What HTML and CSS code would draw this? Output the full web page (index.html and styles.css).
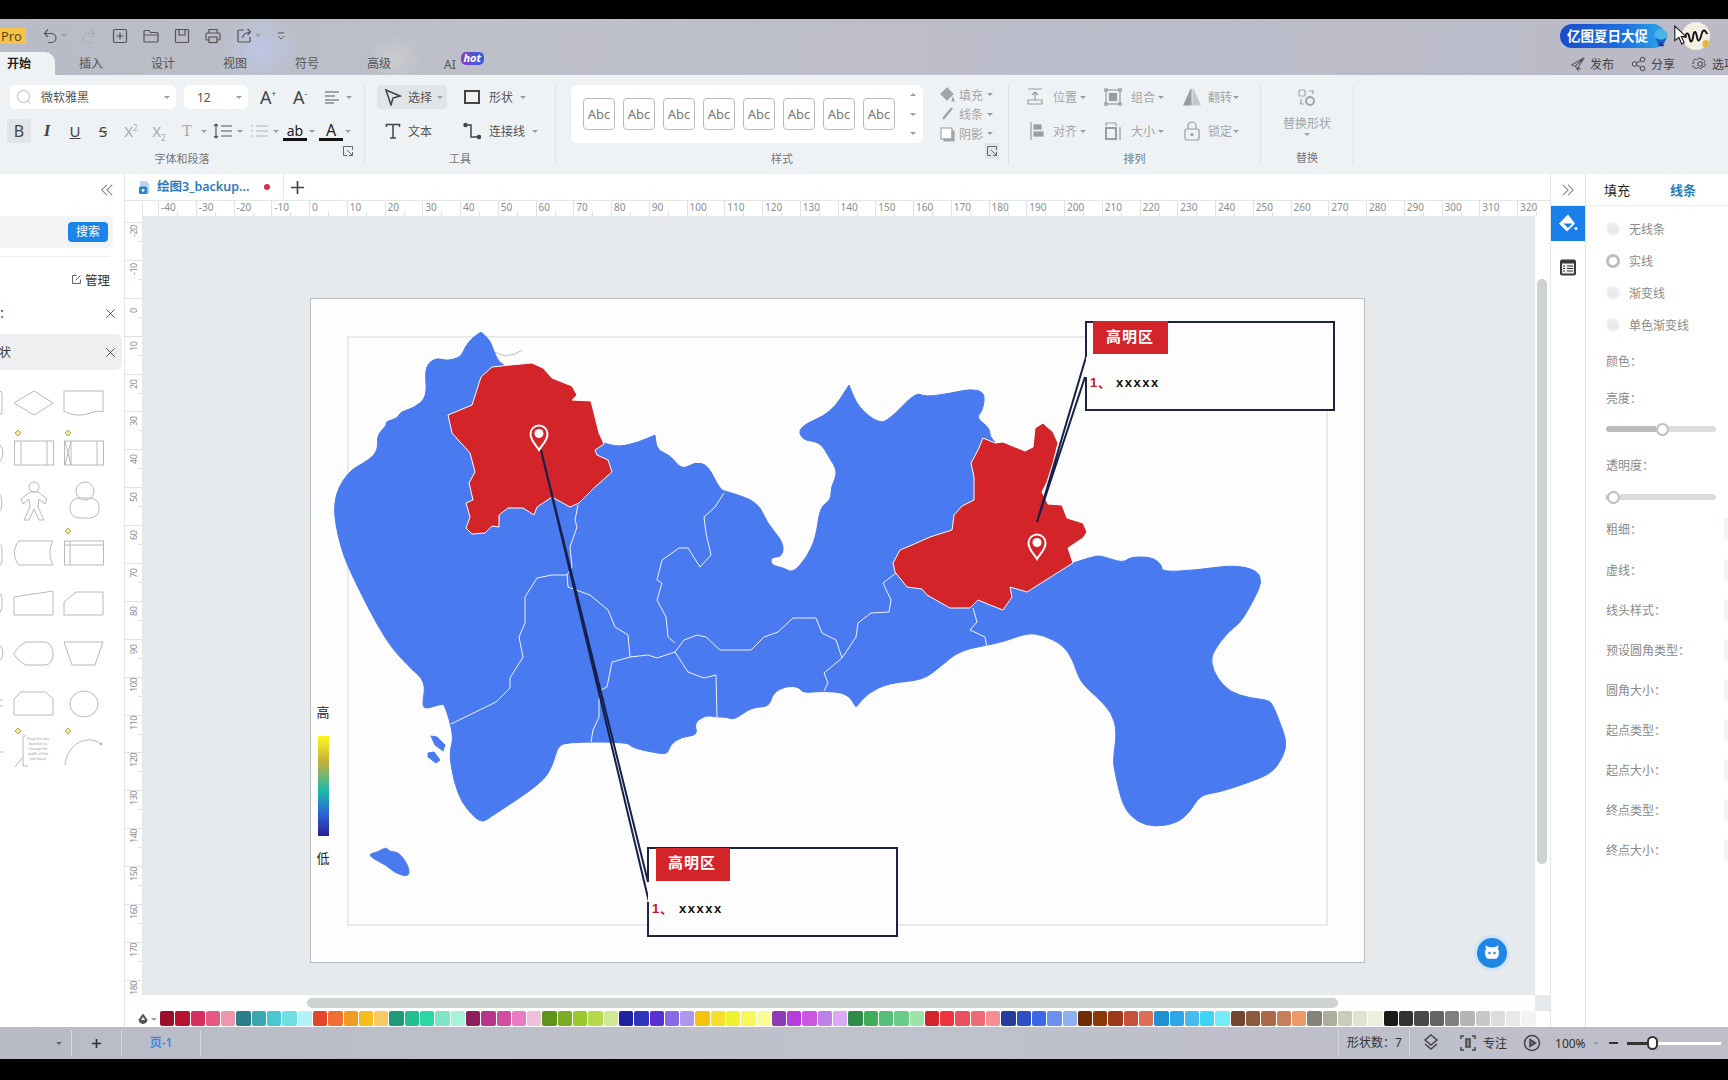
FILE: index.html
```html
<!DOCTYPE html>
<html lang="zh-CN">
<head>
  <meta charset="UTF-8" />
  <meta name="viewport" content="width=device-width, initial-scale=1" />
  <title>亿图图示</title>
  <link rel="stylesheet" href="styles.css">
</head>
<body>
  <div class="black-bar top"></div>

  <header class="titlebar">
    <div class="quick-row">
      <span class="pro">Pro</span>
      <div class="quick">
        <span class="with-caret"><svg class="ico" viewBox="0 0 18 18"><path d="M7 2.500 3.500 6.500 7 10M4 6.500h6.500a4.500 4.500 0 0 1 0 9H7"/></svg><i class="caret"></i></span>
        <svg class="ico faint" viewBox="0 0 18 18"><path d="M11 2.500l3.500 4-3.500 3.500M14 6.500H7.500a4.500 4.500 0 0 0 0 9H11"/></svg>
        <svg class="ico" viewBox="0 0 18 18"><rect x="2.500" y="2.500" width="13" height="13" rx="1.500"/><path d="M9 5.500v7M5.500 9h7"/></svg>
        <svg class="ico" viewBox="0 0 18 18"><path d="M2 14V4.500a1 1 0 0 1 1-1h4l1.500 2H15a1 1 0 0 1 1 1V14a1 1 0 0 1-1 1H3a1 1 0 0 1-1-1zM2 8h14"/></svg>
        <svg class="ico" viewBox="0 0 18 18"><rect x="2.500" y="2.500" width="13" height="13" rx="1"/><path d="M6 2.500v5.500h6V2.500"/></svg>
        <svg class="ico" viewBox="0 0 18 18"><path d="M5 6V2.500h8V6M5 13H3a1 1 0 0 1-1-1V7a1 1 0 0 1 1-1h12a1 1 0 0 1 1 1v5a1 1 0 0 1-1 1h-2"/><rect x="5" y="10" width="8" height="5.500"/></svg>
        <span class="with-caret"><svg class="ico" viewBox="0 0 18 18"><path d="M9 3H4a1 1 0 0 0-1 1v10a1 1 0 0 0 1 1h10a1 1 0 0 0 1-1v-4M7.500 11c.5-3.500 3-5.500 8-6M12.500 2l3 3-3 3"/></svg><i class="caret"></i></span>
        <svg class="ico small" viewBox="0 0 18 18"><path d="M5 5h8M5 9l4 4 4-4"/></svg>
      </div>
      <div class="promo-wrap">
        <div class="promo">亿图夏日大促
          <svg class="promo-gift" viewBox="0 0 22 24"><circle cx="11" cy="9" r="7" fill="#49b6e6"/><path d="M4 10c3 5 11 5 14 0l-4 9H8z" fill="#1d5fc8"/><path d="M7 21h8l-4-5z" fill="#153f9c"/></svg>
        </div>
        <div class="avatar">
          <svg viewBox="0 0 30 30"><path d="M3 17c2-7 4-6 5 0s3 5 4-2 3-5 4 1 3 5 5-3 5-2 6 0" fill="none" stroke="#111" stroke-width="2"/><path d="M22 21l4-2 3 2-1 5-3 2-3-2z" fill="#e9b63c"/></svg>
        </div>
      </div>
    </div>
    <div class="tab-row">
      <nav class="tabs">
        <span class="tab active">开始</span>
        <span class="tab">插入</span>
        <span class="tab">设计</span>
        <span class="tab">视图</span>
        <span class="tab">符号</span>
        <span class="tab">高级</span>
        <span class="tab ai">AI<b class="hot">hot</b></span>
      </nav>
      <div class="actions">
        <span class="action"><svg class="ico small-ico" viewBox="0 0 18 18"><path d="M16 2 2 10l4 1.500L16 2l-7 11v3l-3-4.500M9 13l3 2z"/></svg>发布</span>
        <span class="action"><svg class="ico small-ico" viewBox="0 0 18 18"><circle cx="4" cy="9" r="2.500"/><circle cx="13" cy="4" r="2.500"/><circle cx="13" cy="14" r="2.500"/><path d="M6 8l5-3M6 10l5 3"/></svg>分享</span>
        <span class="action"><svg class="ico small-ico" viewBox="0 0 18 18"><circle cx="9" cy="9" r="2.500"/><path d="M7.500 2h3l.5 2 2-.8 2 2.500-1.300 1.800 1.800 1.500-1 3-2.200-.2-.8 2.200-3 .5-1.500-1.700-1.500 1.700-3-.5-.8-2.200-2.200.2-1-3L2 7.500.7 5.700l2-2.500 2 .8z" transform="translate(.6 .6) scale(.93)"/></svg>选项</span>
      </div>
    </div>
    <svg class="cursor" viewBox="0 0 16 24"><path d="M1 1v18l5-4 3.500 8 3-1.500L9 14h6z" fill="#fff" stroke="#111" stroke-width="1.300"/></svg>
  </header>

  <section class="ribbon">
    <div class="rgroup font-group">
      <div class="rbody">
        <div class="rrow font-row-one">
          <div class="combo font-combo">
            <svg class="search-ico" viewBox="0 0 16 16"><circle cx="7.500" cy="7.500" r="6"/><path d="M12 12l2.500 2.500"/></svg>
            <span class="combo-text">微软雅黑</span><i class="caret"></i>
          </div>
          <div class="combo size-combo"><span class="combo-text">12</span><i class="caret"></i></div>
          <span class="fmt big-a">A<sup>+</sup></span>
          <span class="fmt big-a">A<sup>-</sup></span>
          <span class="with-caret"><svg class="ico line-ico" viewBox="0 0 24 18"><path d="M5 4h14M5 8h10M5 12h14M5 15h9"/></svg><i class="caret"></i></span>
        </div>
        <div class="rrow font-row-two">
          <span class="fmt pressed bold-b">B</span>
          <span class="fmt italic-i">I</span>
          <span class="fmt under-u">U</span>
          <span class="fmt strike-s">S</span>
          <span class="fmt muted">X<sup>2</sup></span>
          <span class="fmt muted">X<sub>2</sub></span>
          <span class="with-caret"><span class="fmt muted serif-t">T</span><i class="caret"></i></span>
          <span class="with-caret"><svg class="ico line-ico" viewBox="0 0 24 18"><path d="M5 2v14M3 4l2-2 2 2M3 14l2 2 2-2M10 4h11M10 9h11M10 14h11"/></svg><i class="caret"></i></span>
          <span class="with-caret"><svg class="ico line-ico pale" viewBox="0 0 24 18"><path d="M9 4h12M9 9h12M9 14h12M4 4h2M4 9h2M4 14h2"/></svg><i class="caret"></i></span>
          <span class="with-caret"><span class="fmt bar-text">ab</span><i class="caret"></i></span>
          <span class="with-caret"><span class="fmt bar-text big-letter">A</span><i class="caret"></i></span>
        </div>
      </div>
      <div class="rlabel">字体和段落</div>
      <svg class="launcher" viewBox="0 0 12 12"><path d="M10.500 5V1.500h-9v9H5M5 5l5.500 5.500M10.500 7v3.500H7"/></svg>
    </div>

    <div class="rgroup tool-group">
      <div class="rbody tool-grid">
        <span class="tool selected"><svg class="ico tool-ico" viewBox="0 0 18 18"><path d="M2 2l14 6-7 2-2 7z"/></svg>选择<i class="caret"></i></span>
        <span class="tool second"><svg class="ico tool-ico" viewBox="0 0 18 18"><rect x="2" y="3" width="14" height="12" stroke-width="2"/></svg>形状<i class="caret"></i></span>
        <span class="tool"><svg class="ico tool-ico" viewBox="0 0 18 18"><path d="M2.500 5V2.500h13V5M9 2.500V16M6 16h6"/></svg>文本</span>
        <span class="tool second"><svg class="ico tool-ico" viewBox="0 0 18 18"><path d="M4 3h4v12h6"/><circle cx="2.500" cy="3" r="1.500" fill="#444"/><circle cx="16" cy="15" r="1.500" fill="#444"/></svg>连接线<i class="caret"></i></span>
      </div>
      <div class="rlabel">工具</div>
    </div>

    <div class="rgroup style-group">
      <div class="rbody style-body">
        <div class="style-box">
          <span class="abc">Abc</span><span class="abc">Abc</span><span class="abc">Abc</span><span class="abc">Abc</span>
          <span class="abc">Abc</span><span class="abc">Abc</span><span class="abc">Abc</span><span class="abc">Abc</span>
          <div class="style-arrows"><i class="caret up"></i><i class="caret"></i><i class="caret"></i></div>
        </div>
        <div class="style-side">
          <span class="side-item"><svg class="ico gray-fill" viewBox="0 0 16 16"><path d="M8 1l6 6-6 6-6-6zM14 11l1 3h-2z"/></svg>填充<i class="caret"></i></span>
          <span class="side-item"><svg class="ico" viewBox="0 0 16 16"><path d="M13 2 4 13" stroke-width="2.500"/></svg>线条<i class="caret"></i></span>
          <span class="side-item"><svg class="ico gray-fill" viewBox="0 0 16 16"><rect x="2" y="2" width="11" height="11" fill="#fff"/><path d="M13 5h2v10H5v-2h8z"/></svg>阴影<i class="caret"></i></span>
        </div>
      </div>
      <div class="rlabel">样式</div>
      <svg class="launcher boxed" viewBox="0 0 12 12"><path d="M10.500 5V1.500h-9v9H5M5 5l5.500 5.500M10.500 7v3.500H7"/></svg>
    </div>

    <div class="rgroup arrange-group">
      <div class="rbody arrange-grid">
        <span class="arrange"><svg class="ico arr-ico" viewBox="0 0 20 20"><path d="M3 2h14M10 5v8M7 8l3-3 3 3M3 13h14v4H3z"/></svg>位置<i class="caret"></i></span>
        <span class="arrange"><svg class="ico arr-ico" viewBox="0 0 20 20"><rect x="3" y="3" width="14" height="14"/><rect x="6.500" y="6.500" width="7" height="7" fill="#9a9da0"/><circle cx="3" cy="3" r="1.500"/><circle cx="17" cy="3" r="1.500"/><circle cx="3" cy="17" r="1.500"/><circle cx="17" cy="17" r="1.500"/></svg>组合<i class="caret"></i></span>
        <span class="arrange"><svg class="ico arr-ico" viewBox="0 0 20 20"><path d="M9 2 2 18h7z" fill="#9a9da0"/><path d="M11 2l7 16h-7z" fill="#c6c9cc" stroke="#c6c9cc"/></svg>翻转<i class="caret"></i></span>
        <span class="arrange"><svg class="ico arr-ico" viewBox="0 0 20 20"><path d="M6 1v18"/><rect x="9" y="4" width="7" height="4" fill="#9a9da0"/><rect x="9" y="11" width="9" height="4" fill="#9a9da0"/></svg>对齐<i class="caret"></i></span>
        <span class="arrange"><svg class="ico arr-ico" viewBox="0 0 20 20"><path d="M3 2h10M3 2v3M13 2v3"/><rect x="3" y="7" width="10" height="11" stroke-width="2"/><path d="M17 7v11M16 7h2M16 18h2"/></svg>大小<i class="caret"></i></span>
        <span class="arrange"><svg class="ico arr-ico" viewBox="0 0 20 20"><rect x="3" y="8" width="14" height="11" rx="2"/><path d="M6 8V5a4 4 0 0 1 8 0v3"/><circle cx="10" cy="13.500" r="1" fill="#9a9da0"/></svg>锁定<i class="caret"></i></span>
      </div>
      <div class="rlabel">排列</div>
    </div>

    <div class="rgroup replace-group">
      <div class="rbody replace-body">
        <svg class="ico replace-ico" viewBox="0 0 20 20"><rect x="2" y="2" width="6" height="6" rx="1"/><circle cx="13" cy="13" r="4" stroke-width="2"/><path d="M4 11v5h3M3 15l1 1M12 3h4v3M15 2l1 1" /></svg>
        <span class="replace-text">替换形状</span>
        <i class="caret"></i>
      </div>
      <div class="rlabel">替换</div>
    </div>
  </section>

  <main class="workspace">
    <aside class="left-panel">
      <div class="panel-head"><svg class="ico collapse" viewBox="0 0 16 16"><path d="M8 2 2 8l6 6M14 2 8 8l6 6"/></svg></div>
      <div class="search-row"><button class="search-btn">搜索</button></div>
      <div class="manage-row"><svg class="ico manage-ico" viewBox="0 0 14 14"><path d="M7 2H2v10h10V7M6 8l6-6"/></svg>管理</div>
      <div class="lib-row"><span>： </span><svg class="ico close" viewBox="0 0 12 12"><path d="M1.500 1.500l9 9M10.500 1.500l-9 9"/></svg></div>
      <div class="lib-row active"><span>状</span><svg class="ico close" viewBox="0 0 12 12"><path d="M1.500 1.500l9 9M10.500 1.500l-9 9"/></svg></div>
      <div class="shape-grid">
        <svg class="shape" viewBox="0 0 40 50"><rect x="-20" y="13" width="58" height="24" rx="3"/></svg>
        <svg class="shape" viewBox="0 0 40 50"><path d="M0 25 20 13 39 25 20 37z"/></svg>
        <svg class="shape" viewBox="0 0 40 50"><path d="M0 13H39V34C30 31 24 38 14 37 8 37 4 35 0 33z"/></svg>

        <svg class="shape" viewBox="0 0 40 50"><circle cx="26" cy="25" r="13"/></svg>
        <svg class="shape" viewBox="0 0 40 50"><polygon class="handle" points="1,5 4,2 7,5 4,8"/><rect x="0.500" y="13" width="39" height="24"/><path d="M7 13V37M33 13V37"/></svg>
        <svg class="shape" viewBox="0 0 40 50"><polygon class="handle" points="1,5 4,2 7,5 4,8"/><rect x="0.500" y="13" width="39" height="24"/><path d="M7 13V37M33 13V37M1 13 7 37M7 13 1 37"/></svg>

        <svg class="shape" viewBox="0 0 40 50"><ellipse cx="28" cy="25" rx="10" ry="14"/></svg>
        <svg class="shape" viewBox="0 0 40 50"><circle cx="20" cy="9" r="5"/><path d="M16 14 7 21l2 5 6-5 1 8-6 13h5l5-11 5 11h5l-6-13 1-8 6 5 2-5-9-7z"/></svg>
        <svg class="shape" viewBox="0 0 40 50"><circle cx="21" cy="13" r="9"/><rect x="6" y="20" width="29" height="20" rx="9"/></svg>

        <svg class="shape" viewBox="0 0 40 50"><rect x="20" y="15" width="18" height="24" rx="6"/></svg>
        <svg class="shape" viewBox="0 0 40 50"><path d="M5 13H39C35 20 35 30 39 37H5C-1 31-1 19 5 13z"/></svg>
        <svg class="shape" viewBox="0 0 40 50"><polygon class="handle" points="1,3 4,0 7,3 4,6"/><rect x="0.500" y="13" width="39" height="24"/><path d="M6 13V37M0 17H39"/></svg>

        <svg class="shape" viewBox="0 0 40 50"><rect x="20" y="13" width="18" height="24" rx="8"/></svg>
        <svg class="shape" viewBox="0 0 40 50"><path d="M0 19 39 13V37H0z"/></svg>
        <svg class="shape" viewBox="0 0 40 50"><path d="M12 14H39V37H0V24z"/></svg>

        <svg class="shape" viewBox="0 0 40 50"><circle cx="28" cy="25" r="11"/></svg>
        <svg class="shape" viewBox="0 0 40 50"><path d="M12 14H30C36 14 39 20 39 26 39 32 36 37 31 37H12C6 34 2 30 0 26 2 21 6 17 12 14z"/></svg>
        <svg class="shape" viewBox="0 0 40 50"><path d="M0 14H39L31 37H8z"/></svg>

        <svg class="shape" viewBox="0 0 40 50"><path d="M30 22H39M30 28H39"/></svg>
        <svg class="shape" viewBox="0 0 40 50"><path d="M7 14H32L39 21V37H0V21z"/></svg>
        <svg class="shape" viewBox="0 0 40 50"><ellipse cx="20" cy="26" rx="14" ry="13"/></svg>

        <svg class="shape" viewBox="0 0 40 50"><path d="M32 24H39"/></svg>
        <svg class="shape" viewBox="0 0 40 50"><polygon class="handle" points="1,3 4,0 7,3 4,6"/><path d="M12 8H9V38H14M9 29 1 39"/><text class="tiny" x="24" y="12">Drag the also</text><text class="tiny" x="24" y="17">baseline to</text><text class="tiny" x="24" y="22">change the</text><text class="tiny" x="24" y="27">width of the</text><text class="tiny" x="24" y="32">text block</text></svg>
        <svg class="shape" viewBox="0 0 40 50"><polygon class="handle" points="1,3 4,0 7,3 4,6"/><path d="M1 37C3 17 22 5 37 16"/><circle cx="37" cy="16" r="1" fill="#999"/></svg>
      </div>
    </aside>

    <div class="center">
      <div class="doc-tabs">
        <div class="doc-tab">
          <svg class="doc-ico" viewBox="0 0 14 16"><path d="M3 1h6l3 3v11H2V2z" fill="#b9d4ef"/><rect x="1" y="7" width="9" height="8" rx="2" fill="#2f83c9"/><circle cx="5.500" cy="11" r="1.500" fill="#fff"/></svg>
          <span class="doc-name">绘图3_backup...</span>
          <i class="dirty"></i>
        </div>
        <svg class="ico doc-add" viewBox="0 0 16 16"><path d="M8 1v14M1 8h14"/></svg>
      </div>
      <div class="ruler-row">
        <div class="ruler-corner"></div>
        <div class="ruler-h" id="rulerH"></div>
      </div>
      <div class="canvas-row">
        <div class="ruler-v" id="rulerV"></div>
        <div class="canvas">
          <div class="page">
            <svg class="drawing" viewBox="310 298 1055 665">
              <defs>
                <linearGradient id="legendGrad" x1="0" y1="0" x2="0" y2="1">
                  <stop offset="0" stop-color="#fbf71f"/>
                  <stop offset=".25" stop-color="#c9b13a"/>
                  <stop offset=".55" stop-color="#1cb9ac"/>
                  <stop offset=".78" stop-color="#2a63d8"/>
                  <stop offset="1" stop-color="#2c1f90"/>
                </linearGradient>
                <g id="pin">
                  <path d="M0 13C-3 8-8.500 3.500-8.500-3-8.500-8-4.500-11.500 0-11.500 4.500-11.500 8.500-8 8.500-3 8.500 3.500 3 8 0 13z" fill="#d3242a" stroke="#fff" stroke-width="2"/>
                  <circle cx="0" cy="-3.500" r="4.500" fill="#fff"/>
                </g>
              </defs>

              <rect class="page-edge" x="310.500" y="298.500" width="1054" height="664"/>
              <rect class="margin-box" x="348" y="337" width="979" height="588"/>

              <path class="land smooth" d="M332 502 347 472 369 460 378 450 377 435 387 425 385 422 398 418 400 412 414 408 427 397 425 372 429 362 438 358 447 361 461 357 465 347 472 338 481 332 481 332 490 340 494 352 499 362 503 364 503 364 540 420 595 440 604 443 604 443 619 447 639 442 655 435 655 435 657 450 670 455 682 470 695 462 708 465 720 490 729 492 758 502 767 523 784 543 782 557 771 557 771 565 784 568 793 573 807 557 816 537 820 507 831 500 831 487 838 472 829 457 820 442 802 440 798 427 831 413 849 385 849 385 858 407 878 423 889 420 916 392 925 397 952 393 970 389 985 392 983 410 976 418 990 428 990 440 1040 480 1060 560 1073 563 1073 563 1095 556 1102 556 1123 563 1130 557 1152 557 1162 565 1162 572 1197 570 1233 565 1257 570 1262 582 1255 597 1248 610 1240 623 1227 633 1213 652 1211 663 1217 678 1230 692 1250 698 1268 700 1273 705 1280 723 1287 742 1283 757 1272 773 1250 782 1220 792 1200 795 1190 812 1177 823 1155 827 1137 822 1123 807 1115 773 1113 760 1117 732 1112 713 1097 697 1080 682 1073 660 1063 645 1043 635 1027 633 1000 643 960 650 940 667 923 680 889 683 868 693 856 707 856 707 847 693 822 691 803 693 799 687 786 686 773 693 769 707 752 707 734 720 727 717 715 717 706 715 694 723 698 735 681 737 670 745 668 753 662 754 632 748 628 742 565 742 557 748 553 765 542 783 489 818 483 822 475 818 462 803 454 782 449 753 454 737 445 705 441 704 426 709 422 705 426 682 409 667 385 640 354 580 340 547z"/>
              <path class="land" d="M431 736 437 737 445 745 443 751 435 745z"/>
              <path class="land" d="M428 753 434 752 440 760 436 763 428 757z"/>
              <path class="land smooth" d="M369 854 378 852 386 847 390 852 399 852 409 867 409 877 395 873 386 865 372 858z"/>
              <path class="inlet" d="M494 352 505 356 515 354 522 350"/>

              <g class="borders">
                <path d="M578 505 575 520 577 527 570 547 572 567 567 575 552 575 537 578 525 597 525 623 519 637 523 657 510 678 510 688 496 702 451 724"/>
                <path d="M567 575 568 587 590 595 608 610 615 627 628 635 630 657 612 662 607 687 601 690 599 700 599 717 593 730 591 742"/>
                <path d="M630 657 648 655 657 658 675 652 688 672 704 678 716 675 717 717"/>
                <path d="M675 652 684 640 697 635 706 637 720 650 751 650 764 637 778 632 793 618 816 618 822 633 836 640 842 658 824 673 828 683 824 691"/>
                <path d="M842 658 856 637 858 623 871 613 889 612 891 600 883 583 896 573"/>
                <path d="M675 643 668 637 666 617 657 600 662 583 657 580 662 560 679 548 688 548 700 567 711 555 706 533 704 517 715 507 724 493"/>
                <path d="M973 608 977 622 970 630 985 637 987 648"/>
              </g>

              <path class="district" d="M492 367 510 365 532 363 543 368 552 378 572 386 577 395 572 400 591 401 595 417 599 433 604 444 595 450 597 455 608 460 612 472 595 487 579 503 570 507 552 497 537 507 534 515 523 508 508 508 499 515 499 527 492 526 485 533 472 534 466 528 470 517 466 503 473 500 469 483 475 472 470 453 452 433 448 415 472 405 481 377z"/>
              <path class="district" d="M983 438 995 443 1003 442 1025 451 1033 447 1035 428 1043 423 1053 432 1058 443 1053 463 1047 482 1042 492 1048 504 1062 505 1067 518 1083 523 1087 532 1083 538 1068 548 1073 563 1057 573 1027 592 1010 587 1012 597 1003 610 990 605 978 600 970 608 950 608 927 595 922 589 907 587 895 572 893 563 900 550 912 545 930 537 952 530 954 515 962 506 974 500 974 477 971 463 978 450z"/>

              <use href="#pin" x="539" y="437"/>
              <use href="#pin" x="1037" y="546"/>

              <path class="leader" d="M541 450 648 882M541 450 649 902"/>
              <path class="leader" d="M1037 522 1086 357M1037 522 1085 377"/>

              <path class="callout" d="M1086 357V322H1334V410H1086V377"/>
              <rect class="callout-tag" x="1093" y="321" width="75" height="33"/>
              <text class="tag-text" x="1130" y="342">高明区</text>
              <text class="item-num" x="1090" y="387">1</text><text class="item-num" x="1098" y="387">、</text>
              <text class="item-text" x="1116" y="387">xxxxx</text>

              <path class="callout" d="M648 882V848H897V936H648V902"/>
              <rect class="callout-tag" x="656" y="848" width="74" height="33"/>
              <text class="tag-text" x="692" y="868">高明区</text>
              <text class="item-num" x="652" y="913">1</text><text class="item-num" x="660" y="913">、</text>
              <text class="item-text" x="679" y="913">xxxxx</text>

              <text class="legend-text" x="323" y="717">高</text>
              <rect x="318" y="736" width="11" height="100" fill="url(#legendGrad)"/>
              <text class="legend-text" x="323" y="863">低</text>
            </svg>
          </div>
          <div class="bot">
            <svg viewBox="0 0 24 24"><path d="M5 7 4 3l5 2h6l5-2-1 4c2 2 2 10-2 12H7C3 17 3 9 5 7z" fill="#fff"/><circle cx="9" cy="12" r="1.500" fill="#1f86e6"/><circle cx="15" cy="12" r="1.500" fill="#1f86e6"/></svg>
          </div>
        </div>
        <div class="scroll-v"><div class="scroll-v-thumb"></div></div>
      </div>
      <div class="scroll-h"><div class="scroll-h-thumb"></div><div class="scroll-corner"></div></div>
      <div class="palette">
        <div class="palette-ico"><svg class="ico fill-dark" viewBox="0 0 16 16"><path d="M8 1 3 8c0 3 2 5 5 5s5-2 5-5z"/><path d="M8 5 5.500 8.500h5z" fill="#eee"/></svg><i class="caret"></i></div>
        <div class="swatches" id="swatches"></div>
      </div>
    </div>

    <aside class="right-panel">
      <div class="side-icons">
        <div class="expand"><svg class="ico collapse" viewBox="0 0 16 16"><path d="M2 2l6 6-6 6M8 2l6 6-6 6"/></svg></div>
        <div class="side-btn active"><svg viewBox="0 0 20 20"><path d="M10 1 1 10l8 8 8-8z" fill="#fff"/><path d="M5.500 10h9L10 14.500z" fill="#1a7fe8"/><circle cx="18" cy="15" r="1.500" fill="#fff"/></svg></div>
        <div class="side-btn"><svg viewBox="0 0 20 20"><rect x="2" y="2" width="16" height="16" rx="2" fill="#3a3a3a"/><rect x="4" y="6" width="12" height="10" fill="#eee"/><path d="M5 8.500h2M9 8.500h6M5 11h2M9 11h6M5 13.500h2M9 13.500h6" stroke="#333" stroke-width="1.200"/></svg></div>
      </div>
      <div class="props">
        <div class="prop-tabs"><span>填充</span><span class="current">线条</span></div>
        <div class="prop-list">
          <div class="radio-row"><i class="radio"></i>无线条</div>
          <div class="radio-row"><i class="radio on"></i>实线</div>
          <div class="radio-row"><i class="radio"></i>渐变线</div>
          <div class="radio-row"><i class="radio"></i>单色渐变线</div>
          <div class="prop-row plain color-row">颜色：</div>
          <div class="prop-row plain short-row">亮度：</div>
          <div class="slider"><span class="slider-fill bright"></span><i class="knob"></i><span class="slider-rest"></span></div>
          <div class="prop-row plain alpha-row">透明度：</div>
          <div class="slider"><span class="slider-fill none"></span><i class="knob"></i><span class="slider-rest"></span></div>
          <div class="prop-row first-input">粗细：<i class="input-stub"></i></div>
          <div class="prop-row">虚线：<i class="input-stub"></i></div>
          <div class="prop-row">线头样式：<i class="input-stub"></i></div>
          <div class="prop-row">预设圆角类型：<i class="input-stub"></i></div>
          <div class="prop-row">圆角大小：<i class="input-stub"></i></div>
          <div class="prop-row">起点类型：<i class="input-stub"></i></div>
          <div class="prop-row">起点大小：<i class="input-stub"></i></div>
          <div class="prop-row">终点类型：<i class="input-stub"></i></div>
          <div class="prop-row">终点大小：<i class="input-stub"></i></div>
        </div>
      </div>
    </aside>
  </main>

  <footer class="statusbar">
    <div class="page-menu"><i class="caret"></i></div>
    <div class="page-add"><svg class="ico add-ico" viewBox="0 0 12 12"><path d="M6 1v10M1 6h10"/></svg></div>
    <div class="page-tab">页-1</div>
    <div class="status-right">
      <div class="shape-count">形状数：7</div>
      <svg class="ico status-ico layers" viewBox="0 0 18 18"><path d="M9 1 15 6 9 11 3 6zM3 10l6 5 6-5"/></svg>
      <svg class="ico status-ico focus" viewBox="0 0 18 18"><path d="M5 2H2v3M13 2h3v3M5 16H2v-3M13 16h3v-3"/><rect x="7" y="5" width="4" height="8" fill="#888"/></svg>
      <span class="focus-text">专注</span>
      <svg class="ico status-ico play" viewBox="0 0 18 18"><circle cx="9" cy="9" r="7.500"/><path d="M7 5.500 12.500 9 7 12.500z" fill="#777"/></svg>
      <span class="zoom-text">100%</span><i class="caret"></i>
      <span class="zoom-minus"></span>
      <div class="zoom-slider"><span class="zoom-fill"></span><i class="zoom-knob"></i><span class="zoom-rest"></span></div>
    </div>
  </footer>
  <div class="black-bar bottom"></div>

  <script src="script.js"></script>
</body>
</html>
```

FILE: styles.css
```css
* {
  box-sizing: border-box;
}
body {
  margin: 0;
  height: 100vh;
  display: flex;
  flex-direction: column;
  overflow: hidden;
  font-family: "Noto Sans", "Noto Sans CJK SC", sans-serif;
  font-size: 12px;
  color: #444;
  background: #000;
}
i {
  font-style: normal;
}
.black-bar {
  background: #000;
  flex: none;
}
.black-bar.top {
  height: 19px;
}
.black-bar.bottom {
  height: 21px;
}
.ico {
  width: 18px;
  height: 18px;
  flex: none;
  fill: none;
  stroke: #555;
  stroke-width: 1.2;
}
.caret {
  display: inline-block;
  flex: none;
  width: 0;
  height: 0;
  border-left: 3px solid transparent;
  border-right: 3px solid transparent;
  border-top: 3px solid #9a9da1;
}
.caret.up {
  border-top: 0;
  border-bottom: 3px solid #9a9da1;
}
.with-caret {
  display: inline-flex;
  align-items: center;
  gap: 2px;
}

/* title bar */
.titlebar {
  position: relative;
  height: 56px;
  flex: none;
  background:
    radial-gradient(ellipse 40px 36px at 260px 30px, rgba(190, 200, 235, .8), transparent),
    radial-gradient(ellipse 30px 26px at 395px 40px, rgba(215, 215, 215, .55), transparent),
    linear-gradient(90deg, #b9bcc6, #bdbfc9 30%, #bcbdca 60%, #babbc7);
}
.quick-row {
  height: 33px;
  display: flex;
  align-items: center;
}
.pro {
  width: 26px;
  height: 16px;
  margin-right: 15px;
  padding-left: 1px;
  line-height: 16px;
  font-size: 13px;
  color: #5b4a1a;
  background: #f4c447;
  border-radius: 0 2px 2px 0;
}
.quick {
  display: flex;
  align-items: center;
  gap: 13px;
}
.ico.faint {
  stroke: #a8abb8;
}
.ico.small {
  width: 14px;
}
.promo-wrap {
  margin-left: auto;
  margin-right: 18px;
  display: flex;
  align-items: center;
  gap: 17px;
}
.promo {
  position: relative;
  width: 105px;
  height: 24px;
  line-height: 24px;
  padding-left: 7px;
  border-radius: 12px;
  font-size: 13.500px;
  font-weight: 700;
  color: #fff;
  white-space: nowrap;
  background: linear-gradient(90deg, #1b4ccc, #1f6fe0 60%, #2aa5e8);
}
.promo-gift {
  position: absolute;
  right: -6px;
  top: 3px;
  width: 20px;
  height: 22px;
}
.avatar {
  width: 28px;
  height: 28px;
  border-radius: 50%;
  background: #f3efe2;
}
.cursor {
  position: absolute;
  left: 1674px;
  top: 6px;
  width: 13px;
  height: 20px;
}
.tab-row {
  height: 23px;
  display: flex;
  justify-content: space-between;
}
.tabs {
  display: flex;
}
.tab {
  width: 72px;
  line-height: 23px;
  text-align: center;
  color: #555;
}
.tab.active {
  width: 55px;
  padding-right: 17px;
  font-weight: 700;
  color: #222;
  background: #eef2f5;
  border-radius: 0 10px 0 0;
}
.tab.ai {
  width: 100px;
  padding-left: 29px;
  text-align: left;
}
.hot {
  display: inline-block;
  vertical-align: 7px;
  margin-left: 5px;
  width: 23px;
  height: 13px;
  line-height: 12px;
  text-align: center;
  font-size: 11px;
  font-weight: 700;
  font-style: italic;
  color: #fff;
  border-radius: 5px;
  background: linear-gradient(90deg, #8a3fc4, #2f5fe0);
}
.actions {
  width: 158px;
  display: flex;
  gap: 17px;
  overflow: hidden;
}
.action {
  display: flex;
  align-items: center;
  gap: 4px;
  flex: none;
  color: #444;
}
.small-ico {
  width: 16px;
  height: 16px;
}

/* ribbon */
.ribbon {
  height: 99px;
  flex: none;
  padding-top: 10px;
  display: flex;
  align-items: flex-start;
  background: #eef2f5;
}
.rgroup {
  position: relative;
  height: 80px;
  display: flex;
  flex-direction: column;
  border-right: 1px solid #dfe3e6;
}
.rbody {
  height: 58px;
}
.rlabel {
  margin-top: 9px;
  text-align: center;
  font-size: 11px;
  line-height: 14px;
  color: #777;
}
.launcher {
  position: absolute;
  width: 12px;
  height: 12px;
  right: 10px;
  bottom: 8px;
  fill: none;
  stroke: #666;
}
.launcher.boxed {
  right: 9px;
  bottom: 6px;
  width: 14px;
  height: 16px;
  padding: 2px 1px;
  background: #e2e5e8;
}
.font-group {
  width: 365px;
}
.rrow {
  display: flex;
  align-items: center;
  height: 24px;
}
.font-row-one {
  padding-left: 10px;
  gap: 8px;
}
.font-row-two {
  margin-top: 10px;
  padding-left: 7px;
  gap: 4px;
}
.combo {
  height: 24px;
  display: flex;
  align-items: center;
  background: #fff;
  border-radius: 5px;
}
.font-combo {
  width: 166px;
  padding: 0 6px 0 6px;
}
.search-ico {
  width: 16px;
  height: 16px;
  fill: none;
  stroke: #b5b8bb;
}
.combo-text {
  flex: 1;
  color: #555;
}
.font-combo .combo-text {
  margin-left: 9px;
}
.size-combo {
  width: 64px;
  padding: 0 6px 0 13px;
}
.fmt {
  width: 24px;
  height: 24px;
  flex: none;
  line-height: 24px;
  text-align: center;
  font-size: 15px;
  color: #444;
}
.fmt sup,
.fmt sub {
  font-size: 8px;
  line-height: 0;
}
.big-a {
  font-size: 18px;
}
.line-ico {
  width: 24px;
}
.line-ico.pale {
  stroke: #b0b3b6;
}
.pressed {
  background: #e2e5e8;
  border-radius: 3px;
}
.bold-b {
  font-size: 16px;
}
.italic-i {
  font-family: "Liberation Serif", serif;
  font-style: italic;
  font-weight: 700;
  font-size: 17px;
}
.under-u {
  text-decoration: underline;
}
.strike-s {
  text-decoration: line-through;
}
.muted {
  color: #a6a9ac;
}
.serif-t {
  font-family: "Liberation Serif", serif;
  font-size: 16px;
}
.bar-text {
  line-height: 19px;
  font-size: 14px;
  color: #222;
  border-bottom: 3px solid #111;
  height: 20px;
}
.big-letter {
  font-size: 16px;
}
.tool-group {
  width: 191px;
}
.tool-grid {
  padding-left: 12px;
  display: grid;
  grid-template-columns: 70px auto;
  grid-template-rows: 24px 24px;
  column-gap: 16px;
  row-gap: 10px;
}
.tool {
  display: flex;
  align-items: center;
  gap: 6px;
  padding-left: 7px;
  border-radius: 4px;
  color: #555;
}
.tool.selected {
  background: #e2e5e8;
}
.tool.second {
  padding-left: 0;
  gap: 8px;
}
.tool-ico {
  stroke: #444;
  stroke-width: 1.500;
}
.tool .caret {
  margin-left: -1px;
}
.style-group {
  width: 453px;
}
.style-body {
  display: flex;
  padding-left: 15px;
  gap: 16px;
}
.style-box {
  width: 352px;
  height: 58px;
  padding-left: 12px;
  display: flex;
  align-items: center;
  gap: 8px;
  background: #fff;
  border-radius: 6px;
}
.abc {
  width: 32px;
  height: 32px;
  line-height: 30px;
  text-align: center;
  font-size: 13px;
  color: #777;
  border: 1px solid #bbb;
  border-radius: 4px;
}
.style-arrows {
  height: 42px;
  margin-left: 7px;
  display: flex;
  flex-direction: column;
  justify-content: space-between;
  align-items: center;
}
.style-side {
  display: flex;
  flex-direction: column;
  justify-content: space-between;
}
.side-item {
  height: 19px;
  display: flex;
  align-items: center;
  gap: 4px;
  color: #a2a5a8;
}
.side-item .ico {
  width: 16px;
  height: 16px;
  stroke: #a2a5a8;
}
.side-item .gray-fill {
  fill: #a2a5a8;
}
.arrange-group {
  width: 252px;
}
.arrange-grid {
  padding-left: 16px;
  display: grid;
  grid-template-columns: 78px 79px auto;
  grid-template-rows: 24px 24px;
  row-gap: 10px;
}
.arrange {
  display: flex;
  align-items: center;
  gap: 8px;
  color: #a2a5a8;
}
.arrange:nth-child(3n) {
  gap: 6px;
}
.arrange .caret {
  margin-left: -5px;
}
.arr-ico {
  width: 20px;
  height: 20px;
  stroke: #9a9da0;
}
.replace-group {
  width: 93px;
}
.replace-body {
  display: flex;
  flex-direction: column;
  align-items: center;
  padding-top: 3px;
}
.replace-ico {
  width: 20px;
  height: 20px;
  stroke: #a2a5a8;
}
.replace-text {
  margin-top: 6px;
  color: #a2a5a8;
}
.replace-body .caret {
  margin-top: 1px;
}

/* workspace */
.workspace {
  height: 853px;
  flex: none;
  display: flex;
  background: #fff;
}
.left-panel {
  width: 125px;
  flex: none;
  overflow: hidden;
  border-right: 1px solid #e4e6e8;
}
.panel-head {
  height: 42px;
  padding: 9px 10px 0 0;
  display: flex;
  justify-content: flex-end;
}
.collapse {
  width: 14px;
  height: 14px;
  stroke: #777;
}
.search-row {
  width: 113px;
  height: 32px;
  padding: 6px 5px;
  display: flex;
  justify-content: flex-end;
  background: #f1f3f4;
  border-radius: 0 5px 5px 0;
}
.search-btn {
  width: 40px;
  height: 20px;
  padding: 0;
  border: none;
  border-radius: 4px;
  font-family: inherit;
  font-size: 12px;
  line-height: 20px;
  color: #fff;
  background: #1a84e8;
}
.manage-row {
  width: 110px;
  margin-top: 8px;
  height: 41px;
  padding-top: 5px;
  display: flex;
  align-items: center;
  justify-content: flex-end;
  gap: 3px;
  border-top: 1px solid #eceeef;
  font-size: 12.500px;
  color: #333;
}
.manage-ico {
  width: 11px;
  height: 11px;
}
.lib-row {
  width: 122px;
  height: 32px;
  display: flex;
  align-items: center;
  justify-content: space-between;
  padding-right: 6px;
  color: #333;
  border-radius: 0 6px 6px 0;
}
.lib-row.active {
  height: 36px;
  margin-top: 5px;
  background: #eeeff0;
}
.lib-row span {
  margin-left: -1px;
}
.close {
  width: 11px;
  height: 11px;
  stroke: #444;
  stroke-width: 1;
}
.shape-grid {
  margin: 8px 0 0 -36px;
  display: grid;
  grid-template-columns: repeat(3, 40px);
  grid-auto-rows: 50px;
  column-gap: 10px;
}
.shape {
  width: 40px;
  height: 50px;
  overflow: visible;
  fill: none;
  stroke: #b9b9b9;
  stroke-width: 1;
}
.handle {
  fill: #efe6a0;
  stroke: #b5a94f;
}
.tiny {
  font-size: 3.600px;
  fill: #999;
  stroke: none;
  text-anchor: middle;
}

.center {
  width: 1425px;
  flex: none;
  display: flex;
  flex-direction: column;
}
.doc-tabs {
  height: 26px;
  display: flex;
  align-items: center;
}
.doc-tab {
  width: 159px;
  height: 26px;
  display: flex;
  align-items: center;
  padding-left: 13px;
  border-right: 1px solid #e6e8ea;
}
.doc-ico {
  width: 13px;
  height: 15px;
}
.doc-name {
  margin-left: 6px;
  font-weight: 600;
  font-size: 12.500px;
  line-height: 24px;
  color: #2a7bbd;
  white-space: nowrap;
}
.dirty {
  margin-left: 15px;
  width: 6px;
  height: 6px;
  border-radius: 50%;
  background: #d1304f;
}
.doc-add {
  width: 15px;
  height: 15px;
  margin-left: 6px;
  stroke: #444;
  stroke-width: 1.800;
}
.ruler-row {
  height: 16px;
  flex: none;
  display: flex;
  border-top: 1px solid #e4e6e8;
}
.ruler-corner {
  width: 18px;
  flex: none;
  border-right: 1px solid #e4e6e8;
}
.ruler-h {
  flex: 1;
  display: flex;
  padding-left: 15px;
  overflow: hidden;
}
.tick-h {
  position: relative;
  flex: 0 0 37.750px;
  padding-left: 2px;
  border-left: 1px solid #e0e2e4;
  font-size: 10px;
  line-height: 13px;
  color: #8a8d90;
}
.tick-h::after {
  content: "";
  position: absolute;
  left: 18px;
  bottom: 0;
  height: 4px;
  border-left: 1px solid #e0e2e4;
}
.canvas-row {
  height: 779px;
  flex: none;
  display: flex;
}
.ruler-v {
  width: 18px;
  flex: none;
  padding-top: 6px;
  overflow: hidden;
  border-right: 1px solid #e4e6e8;
}
.tick-v {
  position: relative;
  height: 37.900px;
  border-top: 1px solid #e0e2e4;
  display: flex;
  justify-content: center;
}
.tick-v::after {
  content: "";
  position: absolute;
  top: 18px;
  right: 0;
  width: 4px;
  border-top: 1px solid #e0e2e4;
}
.tick-v span {
  height: 14px;
  writing-mode: vertical-rl;
  transform: rotate(180deg);
  white-space: nowrap;
  font-size: 9px;
  line-height: 14px;
  letter-spacing: -.5px;
  color: #8a8d90;
}
.canvas {
  position: relative;
  width: 1392px;
  flex: none;
  padding: 82px 0 0 167px;
  overflow: hidden;
  background: #e7eaed;
}
.page {
  width: 1055px;
  height: 665px;
  background: #fdfdfd;
}
.drawing {
  display: block;
  width: 1055px;
  height: 665px;
}
.page-edge {
  fill: none;
  stroke: #b9bcbf;
}
.margin-box {
  fill: none;
  stroke: #d4d6d8;
}
.land {
  fill: #4a7af0;
  stroke: #4a7af0;
  stroke-width: 1;
  stroke-linejoin: round;
}
.inlet {
  fill: none;
  stroke: #4a7af0;
  stroke-width: .7;
  opacity: .7;
}
.borders path {
  fill: none;
  stroke: #fff;
  stroke-width: 1;
  opacity: .9;
}
.district {
  fill: #d3242a;
  stroke: #fff;
  stroke-width: 1;
  stroke-linejoin: round;
}
.leader {
  fill: none;
  stroke: #16204a;
  stroke-width: 2;
}
.callout {
  fill: #fdfdfd;
  stroke: #1b2440;
  stroke-width: 2;
}
.callout-tag {
  fill: #d3242a;
}
.tag-text {
  fill: #fff;
  font-size: 15px;
  font-weight: 700;
  letter-spacing: 1px;
  text-anchor: middle;
}
.item-num {
  fill: #c4143a;
  font-family: "Liberation Sans", "Noto Sans CJK SC", sans-serif;
  font-size: 13px;
  font-weight: 700;
}
.item-text {
  fill: #111;
  font-family: "Liberation Sans", sans-serif;
  font-size: 13px;
  font-weight: 700;
  letter-spacing: 1.500px;
}
.legend-text {
  fill: #222;
  font-size: 13px;
  text-anchor: middle;
}
.bot {
  position: absolute;
  left: 1334px;
  top: 722px;
  width: 30px;
  height: 30px;
  padding: 5px;
  border-radius: 50%;
  background: #1f86e6;
  box-shadow: 0 0 0 3px #cfe4f8;
}
.scroll-v {
  width: 15px;
  flex: none;
  padding: 63px 3px 0 2px;
  background: #fff;
}
.scroll-v-thumb {
  height: 585px;
  background: #cfd2d2;
  border-radius: 5px;
}
.scroll-h {
  height: 16px;
  flex: none;
  display: flex;
  padding-top: 3px;
  background: #fff;
}
.scroll-h-thumb {
  margin-left: 182px;
  width: 1031px;
  height: 10px;
  background: #cfd2d2;
  border-radius: 5px;
}
.scroll-corner {
  margin: -3px 0 0 197px;
  width: 15px;
  height: 16px;
  background: #e7eaed;
}
.palette {
  height: 16px;
  flex: none;
  display: flex;
  background: #fff;
}
.palette-ico {
  width: 35px;
  display: flex;
  align-items: center;
  justify-content: flex-end;
  gap: 1px;
  padding-right: 3px;
}
.fill-dark {
  width: 14px;
  height: 15px;
  fill: #555;
  stroke: none;
}
.swatches {
  display: flex;
  gap: 1px;
}
.swatch {
  width: 14.300px;
  height: 15px;
  border-radius: 2px;
}

/* right panel */
.right-panel {
  width: 178px;
  flex: none;
  display: flex;
}
.side-icons {
  width: 36px;
  flex: none;
  border-left: 1px solid #e4e6e8;
  border-right: 1px solid #dfe1e3;
}
.expand {
  height: 32px;
  padding: 9px 10px;
  border-bottom: 1px solid #e8eaec;
}
.side-btn {
  height: 35px;
  padding: 7px;
  display: flex;
  justify-content: center;
}
.side-btn.active {
  background: #1a7fe8;
}
.side-btn + .side-btn {
  margin-top: 9px;
}
.side-btn svg {
  width: 21px;
  height: 21px;
}
.props {
  flex: 1;
  min-width: 0;
}
.prop-tabs {
  height: 32px;
  display: flex;
  align-items: center;
  gap: 40px;
  padding-left: 18px;
  font-size: 13px;
  color: #222;
  border-bottom: 1px solid #eceeef;
}
.prop-tabs .current {
  font-weight: 600;
  color: #1f7fc0;
}
.prop-list {
  padding: 7px 0 0 20px;
  color: #8a8a8a;
}
.radio-row {
  height: 32px;
  display: flex;
  align-items: center;
  gap: 9px;
}
.radio {
  width: 14px;
  height: 14px;
  border-radius: 50%;
  background: #e9eaeb;
  border: 2px solid #f1f2f2;
}
.radio.on {
  background: #fff;
  border: 3px solid #bdbdbd;
}
.prop-row {
  height: 40px;
  display: flex;
  align-items: center;
  justify-content: space-between;
}
.color-row {
  height: 40px;
}
.short-row {
  height: 34px;
}
.alpha-row {
  height: 36px;
  margin-top: 4px;
}
.first-input {
  height: 36px;
  margin-bottom: 3px;
}
.input-stub {
  width: 10px;
  height: 22px;
  margin-right: -6px;
  background: #f3f4f4;
  border-radius: 3px;
}
.slider {
  width: 110px;
  height: 28px;
  display: flex;
  align-items: center;
}
.slider-fill {
  height: 6px;
  background: #bcbcbc;
  border-radius: 3px 0 0 3px;
}
.slider-fill.bright {
  width: 50px;
}
.slider-fill.none {
  width: 1px;
}
.slider-rest {
  flex: 1;
  height: 6px;
  background: #dcdcdc;
  border-radius: 0 3px 3px 0;
}
.knob {
  width: 13px;
  height: 13px;
  flex: none;
  background: #fff;
  border: 2px solid #bcbcbc;
  border-radius: 50%;
}

/* status bar */
.statusbar {
  height: 32px;
  flex: none;
  display: flex;
  align-items: center;
  color: #333;
  background: linear-gradient(90deg, #b9bcc6, #bfc1cd 50%, #bdbec9);
}
.page-menu {
  width: 72px;
  height: 26px;
  padding-right: 9px;
  display: flex;
  align-items: center;
  justify-content: flex-end;
  border-right: 1px solid #d5d7de;
}
.page-menu .caret {
  border-top-color: #666;
}
.page-add {
  width: 50px;
  height: 26px;
  display: flex;
  align-items: center;
  justify-content: center;
  border-right: 1px solid #d5d7de;
}
.add-ico {
  width: 11px;
  height: 11px;
  stroke: #333;
  stroke-width: 1.800;
}
.page-tab {
  width: 79px;
  line-height: 26px;
  text-align: center;
  font-weight: 600;
  color: #3b86e0;
  border-right: 1px solid #d5d7de;
}
.status-right {
  margin-left: auto;
  width: 390px;
  height: 26px;
  display: flex;
  align-items: center;
}
.shape-count {
  width: 72px;
  padding-left: 8px;
  line-height: 26px;
  white-space: nowrap;
  border-left: 1px solid #d5d7de;
  border-right: 1px solid #d5d7de;
}
.status-ico {
  stroke: #444;
  stroke-width: 1.500;
}
.layers {
  margin-left: 12px;
}
.focus {
  margin-left: 19px;
}
.focus-text {
  margin-left: 6px;
}
.play {
  margin-left: 16px;
}
.zoom-text {
  margin-left: 14px;
}
.status-right .caret {
  margin-left: 7px;
}
.zoom-minus {
  width: 9px;
  height: 2px;
  margin-left: 10px;
  background: #333;
}
.zoom-slider {
  width: 94px;
  margin-left: 9px;
  display: flex;
  align-items: center;
}
.zoom-fill {
  width: 20px;
  height: 3px;
  background: #333;
}
.zoom-knob {
  width: 11px;
  height: 14px;
  flex: none;
  background: #fff;
  border: 2px solid #333;
  border-radius: 6px;
}
.zoom-rest {
  flex: 1;
  height: 3px;
  background: #fff;
}
```

FILE: script.js
```js
const colors = [
  "#9c0f2b", "#b81233", "#d42f5e", "#e45a85", "#ee96ad",
  "#2b7f8b", "#3ba8b0", "#4ac8d2", "#6fdfe4", "#b4f1f4",
  "#e2472b", "#ee7035", "#f39a22", "#f6bd1c", "#f6c966",
  "#1f9a78", "#23bd8f", "#2bd8a5", "#7fe5c4", "#a6f2da",
  "#8f1c5c", "#b5368a", "#cf4f9f", "#e77cc4", "#efc0dc",
  "#5f941b", "#7aad25", "#9ac92d", "#b4d84e", "#d3e894",
  "#1f22a0", "#2d35bd", "#5a2fd7", "#8a69e6", "#ae98eb",
  "#f2c40f", "#f3df2c", "#eff22f", "#f8f85a", "#fbfb9a",
  "#8d3ab8", "#b83bdc", "#cc56e0", "#bf7fe9", "#dca8f5",
  "#2f8c48", "#3fae57", "#57bd77", "#6cca8a", "#9ce3a9",
  "#d2262c", "#ee333d", "#e8505f", "#f06b78", "#f78e95",
  "#263b9e", "#2f50c4", "#3b68e8", "#6d8ff0", "#8fb0ef",
  "#6f2d06", "#8a3b05", "#9c3b1c", "#c5533a", "#dd6f55",
  "#1f90d0", "#2fa5ec", "#45bbf2", "#3fd4f2", "#75ebf7",
  "#744530", "#8b5a3f", "#aa6a4a", "#c67f5a", "#ee9a68",
  "#85827a", "#aeae9c", "#cbcbb9", "#e2e2d0", "#f0f0df",
  "#1a1a1a", "#323232", "#4a4a4a", "#636363", "#808080",
  "#b5b5b5", "#c8c8c8", "#dcdcdc", "#e8e8e8", "#f2f2f2"
];

const swatches = document.getElementById("swatches");
colors.forEach(color => {
  const el = document.createElement("span");
  el.className = "swatch";
  el.style.background = color;
  swatches.appendChild(el);
});

const rulerH = document.getElementById("rulerH");
for (let n = -40; n <= 320; n += 10) {
  const tick = document.createElement("div");
  tick.className = "tick-h";
  tick.innerText = n;
  rulerH.appendChild(tick);
}

const rulerV = document.getElementById("rulerV");
for (let n = -20; n <= 180; n += 10) {
  const tick = document.createElement("div");
  tick.className = "tick-v";
  tick.innerHTML = `<span>${n}</span>`;
  rulerV.appendChild(tick);
}

// round off the traced coast; a point listed twice stays a sharp corner
function mid(a, b) {
  return [(a[0] + b[0]) / 2, (a[1] + b[1]) / 2];
}
document.querySelectorAll(".smooth").forEach(path => {
  const nums = path.getAttribute("d").match(/[\d.]+/g).map(Number);
  const pts = [];
  for (let i = 0; i < nums.length; i += 2) {
    pts.push([nums[i], nums[i + 1]]);
  }
  let d = "M" + mid(pts[pts.length - 1], pts[0]).join(" ");
  pts.forEach((p, i) => {
    const m = mid(p, pts[(i + 1) % pts.length]);
    d += `Q${p[0]} ${p[1]} ${m[0]} ${m[1]}`;
  });
  path.setAttribute("d", d + "Z");
});
```
